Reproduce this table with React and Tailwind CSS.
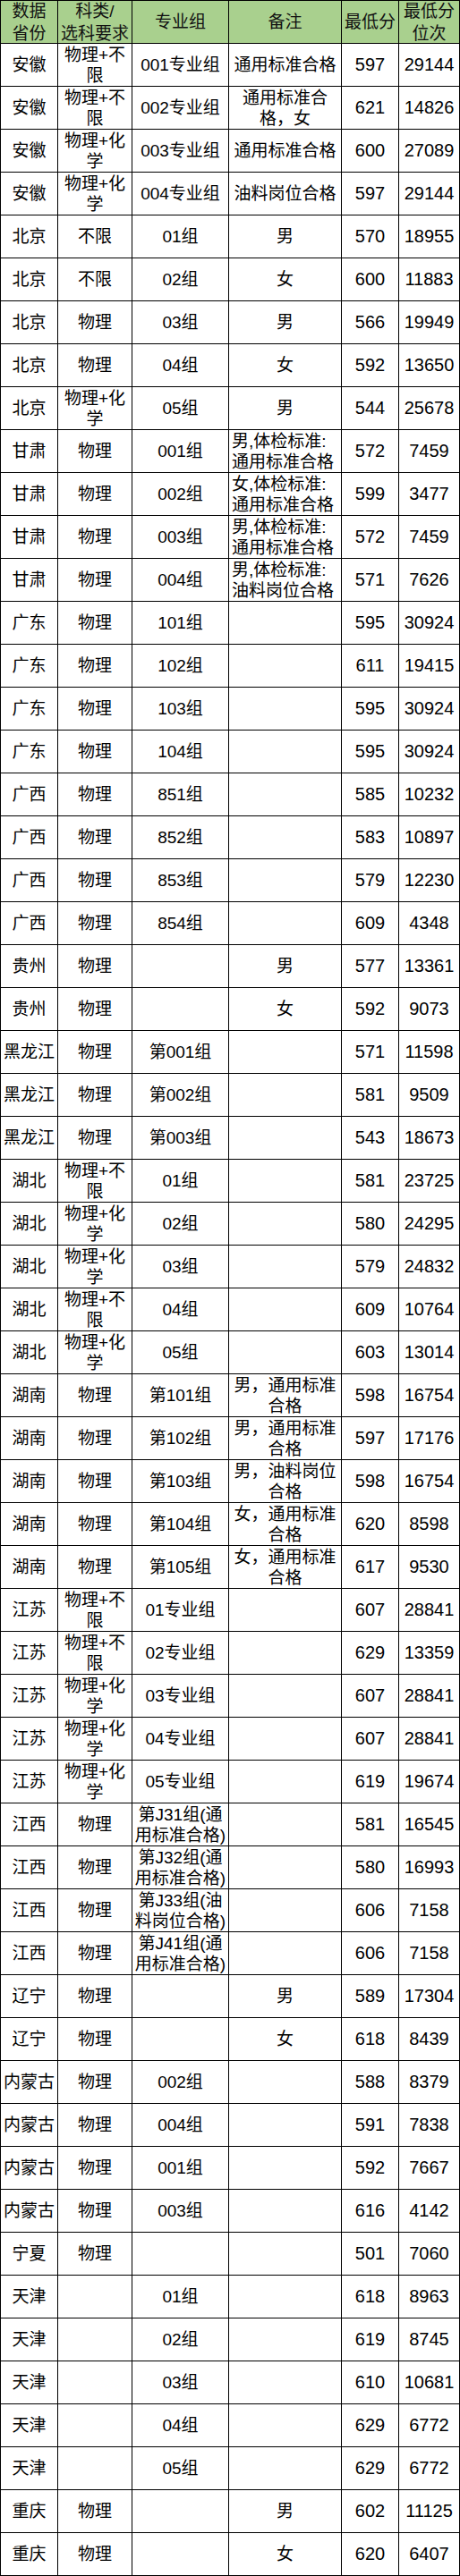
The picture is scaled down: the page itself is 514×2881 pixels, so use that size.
import React from "react";

const L = "left";

const rows = [
  ["安徽", ["物理+不", "限"], ["001专业组"], ["通用标准合格"], "597", "29144"],
  ["安徽", ["物理+不", "限"], ["002专业组"], ["通用标准合", "格，女"], "621", "14826"],
  ["安徽", ["物理+化", "学"], ["003专业组"], ["通用标准合格"], "600", "27089"],
  ["安徽", ["物理+化", "学"], ["004专业组"], ["油料岗位合格"], "597", "29144"],
  ["北京", ["不限"], ["01组"], ["男"], "570", "18955"],
  ["北京", ["不限"], ["02组"], ["女"], "600", "11883"],
  ["北京", ["物理"], ["03组"], ["男"], "566", "19949"],
  ["北京", ["物理"], ["04组"], ["女"], "592", "13650"],
  ["北京", ["物理+化", "学"], ["05组"], ["男"], "544", "25678"],
  ["甘肃", ["物理"], ["001组"], ["男,体检标准:", "通用标准合格"], "572", "7459", L],
  ["甘肃", ["物理"], ["002组"], ["女,体检标准:", "通用标准合格"], "599", "3477", L],
  ["甘肃", ["物理"], ["003组"], ["男,体检标准:", "通用标准合格"], "572", "7459", L],
  ["甘肃", ["物理"], ["004组"], ["男,体检标准:", "油料岗位合格"], "571", "7626", L],
  ["广东", ["物理"], ["101组"], [], "595", "30924"],
  ["广东", ["物理"], ["102组"], [], "611", "19415"],
  ["广东", ["物理"], ["103组"], [], "595", "30924"],
  ["广东", ["物理"], ["104组"], [], "595", "30924"],
  ["广西", ["物理"], ["851组"], [], "585", "10232"],
  ["广西", ["物理"], ["852组"], [], "583", "10897"],
  ["广西", ["物理"], ["853组"], [], "579", "12230"],
  ["广西", ["物理"], ["854组"], [], "609", "4348"],
  ["贵州", ["物理"], [], ["男"], "577", "13361"],
  ["贵州", ["物理"], [], ["女"], "592", "9073"],
  ["黑龙江", ["物理"], ["第001组"], [], "571", "11598"],
  ["黑龙江", ["物理"], ["第002组"], [], "581", "9509"],
  ["黑龙江", ["物理"], ["第003组"], [], "543", "18673"],
  ["湖北", ["物理+不", "限"], ["01组"], [], "581", "23725"],
  ["湖北", ["物理+化", "学"], ["02组"], [], "580", "24295"],
  ["湖北", ["物理+化", "学"], ["03组"], [], "579", "24832"],
  ["湖北", ["物理+不", "限"], ["04组"], [], "609", "10764"],
  ["湖北", ["物理+化", "学"], ["05组"], [], "603", "13014"],
  ["湖南", ["物理"], ["第101组"], ["男，通用标准", "合格"], "598", "16754"],
  ["湖南", ["物理"], ["第102组"], ["男，通用标准", "合格"], "597", "17176"],
  ["湖南", ["物理"], ["第103组"], ["男，油料岗位", "合格"], "598", "16754"],
  ["湖南", ["物理"], ["第104组"], ["女，通用标准", "合格"], "620", "8598"],
  ["湖南", ["物理"], ["第105组"], ["女，通用标准", "合格"], "617", "9530"],
  ["江苏", ["物理+不", "限"], ["01专业组"], [], "607", "28841"],
  ["江苏", ["物理+不", "限"], ["02专业组"], [], "629", "13359"],
  ["江苏", ["物理+化", "学"], ["03专业组"], [], "607", "28841"],
  ["江苏", ["物理+化", "学"], ["04专业组"], [], "607", "28841"],
  ["江苏", ["物理+化", "学"], ["05专业组"], [], "619", "19674"],
  ["江西", ["物理"], ["第J31组(通", "用标准合格)"], [], "581", "16545"],
  ["江西", ["物理"], ["第J32组(通", "用标准合格)"], [], "580", "16993"],
  ["江西", ["物理"], ["第J33组(油", "料岗位合格)"], [], "606", "7158"],
  ["江西", ["物理"], ["第J41组(通", "用标准合格)"], [], "606", "7158"],
  ["辽宁", ["物理"], [], ["男"], "589", "17304"],
  ["辽宁", ["物理"], [], ["女"], "618", "8439"],
  ["内蒙古", ["物理"], ["002组"], [], "588", "8379"],
  ["内蒙古", ["物理"], ["004组"], [], "591", "7838"],
  ["内蒙古", ["物理"], ["001组"], [], "592", "7667"],
  ["内蒙古", ["物理"], ["003组"], [], "616", "4142"],
  ["宁夏", ["物理"], [], [], "501", "7060"],
  ["天津", [], ["01组"], [], "618", "8963"],
  ["天津", [], ["02组"], [], "619", "8745"],
  ["天津", [], ["03组"], [], "610", "10681"],
  ["天津", [], ["04组"], [], "629", "6772"],
  ["天津", [], ["05组"], [], "629", "6772"],
  ["重庆", ["物理"], [], ["男"], "602", "11125"],
  ["重庆", ["物理"], [], ["女"], "620", "6407"],
];

const headers = [
  ["数据", "省份"],
  ["科类/", "选科要求"],
  ["专业组"],
  ["备注"],
  ["最低分"],
  ["最低分", "位次"],
];

function Cell({ lines, left, num }) {
  return (
    <div
      className={
        "bg-white h-[47px] flex flex-col justify-center whitespace-nowrap text-black " +
        (left ? "items-start text-left pl-[3px] " : "items-center text-center ") +
        (num ? "text-[20px]" : "text-[19px]")
      }
    >
      {lines.map((l, i) => (
        <div key={i} className="leading-[23px]">
          {l}
        </div>
      ))}
    </div>
  );
}

export default function App() {
  return (
    <div className="w-[514px] bg-white font-['Liberation_Sans','Noto_Sans_CJK_SC',sans-serif]">
      <div className="grid grid-cols-[63px_82px_107px_125px_63px_67px] gap-px bg-black p-px">
        {headers.map((h, i) => (
          <div
            key={"h" + i}
            className="bg-[#a9d08e] h-[47px] flex flex-col items-center justify-center text-center whitespace-nowrap text-[19px] text-[#111]"
          >
            {h.map((l, j) => (
              <div key={j} className="leading-[25px]">
                {l}
              </div>
            ))}
          </div>
        ))}
        {rows.map((r, i) => (
          <React.Fragment key={i}>
            <Cell lines={[r[0]]} />
            <Cell lines={r[1]} />
            <Cell lines={r[2]} />
            <Cell lines={r[3]} left={r[6] === L} />
            <Cell lines={[r[4]]} num />
            <Cell lines={[r[5]]} num />
          </React.Fragment>
        ))}
      </div>
    </div>
  );
}
